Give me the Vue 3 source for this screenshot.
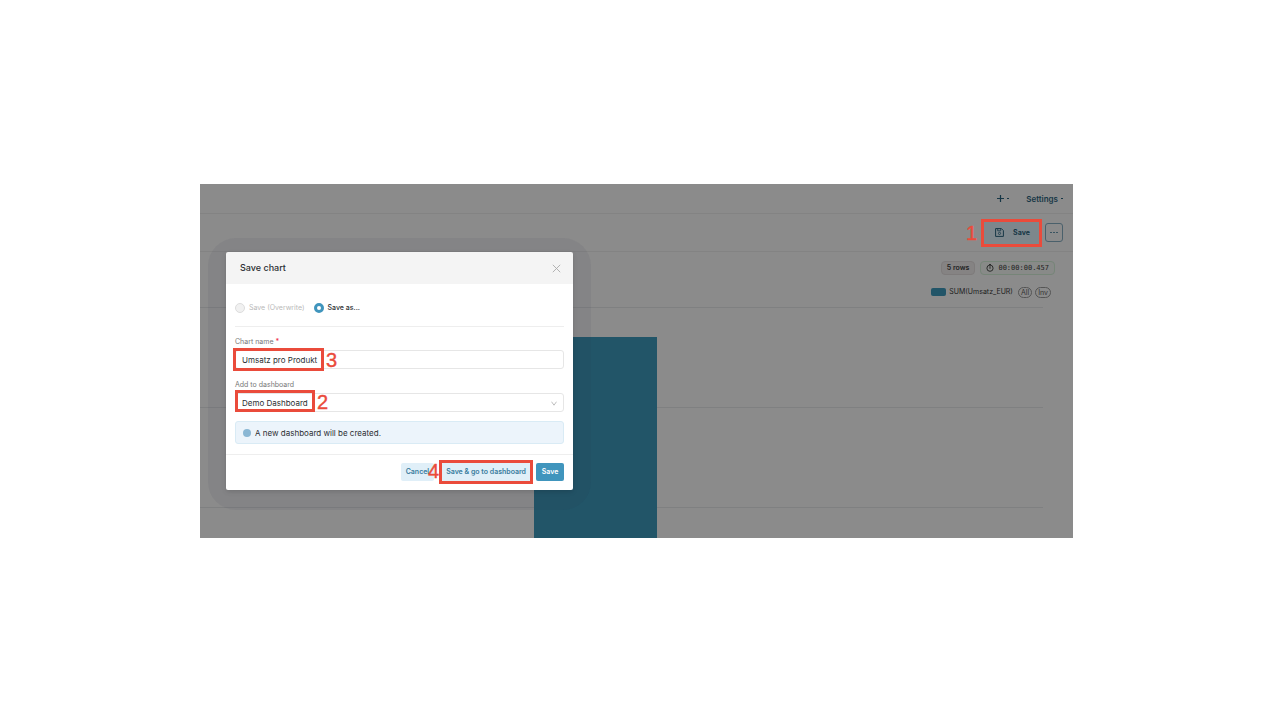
<script setup>
import { ref } from 'vue'

const mode = ref('saveas')
const chartName = ref('Umsatz pro Produkt')
const dashboard = ref('Demo Dashboard')
</script>

<template>
  <main class="page">
    <section class="explore">
      <header class="topbar">
        <button class="nav plus" aria-label="New">
          <svg width="7" height="7" viewBox="0 0 7 7"><path d="M3.5 0v7M0 3.5h7" stroke="currentColor" stroke-width="1.2" /></svg>
          <i class="caret"></i>
        </button>
        <button class="nav">Settings<i class="caret"></i></button>
      </header>

      <div class="toolbar">
        <div class="marked">
          <button class="save-top">
            <svg width="9" height="9" viewBox="0 0 9 9" fill="none" stroke="currentColor" stroke-width="1">
              <path d="M.6.6h5.8l2 2v5.8H.6z" />
              <path d="M2.7.8v2h3v-2" stroke-width=".8" />
              <circle cx="4.5" cy="5.4" r="1.1" stroke-width=".8" />
            </svg>
            Save
          </button>
          <span class="mark mark-one"><b>1</b></span>
        </div>
        <button class="more" aria-label="More"><i></i><i></i><i></i></button>
      </div>

      <div class="status">
        <span class="chip">5 rows</span>
        <span class="chip timer">
          <svg width="8" height="8" viewBox="0 0 8 8" fill="none" stroke="currentColor" stroke-width=".9">
            <circle cx="4" cy="4.2" r="3.1" /><path d="M4 2.2v2.6M3 .5h2" />
          </svg>
          00:00:00.457
        </span>
      </div>

      <div class="legend">
        <i class="swatch"></i>
        <span class="series">SUM(Umsatz_EUR)</span>
        <button class="pill">All</button>
        <button class="pill">Inv</button>
      </div>

      <div class="plot"><div class="bar"></div></div>

      <form class="modal" role="dialog" aria-labelledby="modal-title" @submit.prevent>
        <div class="modal-head">
          <h1 id="modal-title">Save chart</h1>
          <button type="button" class="close" aria-label="Close">
            <svg width="9" height="9" viewBox="0 0 9 9"><path d="M.8.8l7.4 7.4M8.2.8L.8 8.2" stroke="currentColor" stroke-width=".9" /></svg>
          </button>
        </div>

        <div class="modal-body">
          <div class="radios">
            <label class="radio off"><input v-model="mode" type="radio" name="mode" value="overwrite" disabled />Save (Overwrite)</label>
            <label class="radio"><input v-model="mode" type="radio" name="mode" value="saveas" />Save as...</label>
          </div>

          <label class="caption" for="chart-name">Chart name <em>*</em></label>
          <div class="field">
            <input id="chart-name" v-model="chartName" type="text" />
            <span class="mark mark-three"><b>3</b></span>
          </div>

          <label class="caption" for="dashboard">Add to dashboard</label>
          <div class="field">
            <select id="dashboard" v-model="dashboard">
              <option>Demo Dashboard</option>
            </select>
            <svg class="chevron" width="6" height="5" viewBox="0 0 6 5" fill="none"><path d="M.5.7L3 4.2 5.5.7" stroke="currentColor" stroke-width=".8" /></svg>
            <span class="mark mark-two"><b>2</b></span>
          </div>

          <div class="alert"><i></i>A new dashboard will be created.</div>
        </div>

        <div class="modal-foot">
          <button type="button" class="btn">Cancel</button>
          <div class="marked go">
            <button type="button" class="btn">Save &amp; go to dashboard</button>
            <span class="mark mark-four"><b>4</b></span>
          </div>
          <button type="submit" class="btn primary">Save</button>
        </div>
      </form>
    </section>
  </main>
</template>

<style>
body {
  background: #fff;
}
</style>

<style scoped>
* {
  box-sizing: border-box;
}
button,
input,
select {
  font: inherit;
  color: inherit;
  margin: 0;
  padding: 0;
  border: 0;
  background: none;
}
.page {
  padding: 184px 197px 0 200px;
  font: 8px/12px Inter, "Liberation Sans", sans-serif;
  color: #2c2f33;
}
.explore {
  position: relative;
  background: #8b8b8b;
  overflow: hidden;
}
.topbar {
  display: flex;
  justify-content: flex-end;
  align-items: center;
  gap: 17px;
  height: 30px;
  padding-right: 10px;
  border-bottom: 1px solid #838383;
}
.nav {
  display: flex;
  align-items: center;
  gap: 3px;
  font-weight: 600;
  color: #173746;
}
.caret {
  width: 2px;
  height: 1px;
  background: #173746;
}
.toolbar {
  display: flex;
  justify-content: flex-end;
  align-items: center;
  gap: 6px;
  height: 38px;
  padding-right: 10px;
  border-bottom: 1px solid #838383;
}
.marked {
  position: relative;
}
.save-top {
  display: flex;
  align-items: center;
  justify-content: center;
  gap: 9px;
  width: 55px;
  height: 22px;
  padding-left: 2px;
  font-size: 7px;
  font-weight: 700;
  color: #173746;
  background: #7d878c;
}
.more {
  display: flex;
  align-items: center;
  justify-content: center;
  gap: 1px;
  width: 18px;
  height: 19px;
  border: 1px solid #4a606b;
  border-radius: 3px;
}
.more i {
  width: 2px;
  height: 1px;
  background: #3a5461;
}
.status {
  display: flex;
  justify-content: flex-end;
  gap: 5px;
  padding: 9px 18px 0 0;
}
.chip {
  display: flex;
  align-items: center;
  gap: 4px;
  height: 14px;
  padding: 0 5px;
  border: 1px solid #7e7b7b;
  border-radius: 4px;
  background: #858383;
  font-size: 7px;
  font-weight: 600;
  color: #222;
}
.timer {
  border-color: #768578;
  background: #888a88;
  font-family: "DejaVu Sans Mono", "Liberation Mono", monospace;
  font-weight: 400;
  color: #222;
}
.legend {
  display: flex;
  justify-content: flex-end;
  align-items: center;
  gap: 3px;
  height: 12px;
  margin-top: 11px;
  padding-right: 22px;
}
.swatch {
  width: 15px;
  height: 8px;
  border-radius: 2px;
  background: #225568;
}
.series {
  margin-right: 2px;
  font-size: 7px;
  color: #1d1d1d;
}
.pill {
  height: 11px;
  padding: 0 2px;
  border: 1px solid #555;
  border-radius: 6px;
  font-size: 7px;
  line-height: 9px;
  color: #333;
}
.plot {
  display: flex;
  align-items: flex-end;
  height: 231px;
  margin: 9px 30px 0 0;
  background: repeating-linear-gradient(#7f8081 0 1px, transparent 1px 100px);
}
.bar {
  width: 14.6%;
  height: 87%;
  margin-left: 39.6%;
  background: #225568;
}
.modal {
  position: absolute;
  z-index: 1;
  top: 68px;
  left: 26px;
  width: 347px;
  border-radius: 2px;
  box-shadow: 0 2px 5px rgba(0, 0, 0, 0.14);
}
.modal::before {
  content: "";
  position: absolute;
  z-index: -1;
  inset: -14px -18px -20px;
  border-radius: 28px;
  background: rgba(40, 40, 60, 0.06);
}
.modal-head {
  display: flex;
  align-items: center;
  justify-content: space-between;
  height: 32px;
  padding: 0 12px 0 14px;
  border-radius: 2px 2px 0 0;
  background: #f4f4f4;
}
h1 {
  margin: 0;
  font-size: 9px;
  font-weight: 500;
}
.close {
  display: flex;
  color: #aaa;
}
.modal-body {
  padding: 0 9px 10px;
  background: #fff;
}
.radios {
  display: flex;
  align-items: center;
  gap: 9px;
  height: 43px;
  padding-top: 5px;
  margin-bottom: 8px;
  border-bottom: 1px solid #eee;
  font-size: 7px;
  font-weight: 500;
}
.radio {
  display: flex;
  align-items: center;
  gap: 4px;
}
.radio input {
  appearance: none;
  width: 10px;
  height: 10px;
  border: 3px solid #4095bd;
  border-radius: 50%;
  background: #fff;
}
.off {
  color: #b9b9b9;
  font-weight: 400;
}
.off input {
  border: 1px solid #ddd;
  background: #f1f1f1;
}
.caption {
  display: block;
  height: 15px;
  padding-top: 1px;
  font-size: 7px;
  color: #777;
}
.caption em {
  font-style: normal;
  font-weight: 600;
  color: #f0384a;
}
.field {
  position: relative;
  margin-bottom: 9px;
}
.field input,
.field select {
  display: block;
  appearance: none;
  width: 100%;
  height: 19px;
  padding: 0 6px;
  border: 1px solid #e6e6e6;
  border-radius: 3px;
  background: #fff;
}
.chevron {
  position: absolute;
  top: 8px;
  right: 7px;
  color: #b0b0b0;
}
.alert {
  display: flex;
  align-items: center;
  gap: 4px;
  height: 23px;
  padding: 0 7px;
  border: 1px solid #d9ebf5;
  border-radius: 3px;
  background: #ecf4fb;
}
.alert i {
  width: 8px;
  height: 8px;
  border-radius: 50%;
  background: #8ab7d4;
}
.modal-foot {
  display: flex;
  justify-content: flex-end;
  gap: 5px;
  padding: 8px 9px 9px;
  border-top: 1px solid #eee;
  border-radius: 0 0 2px 2px;
  background: #fff;
}
.go {
  margin-left: 2px;
}
.btn {
  display: block;
  height: 18px;
  padding: 0 5px;
  border-radius: 2px;
  background: #e0eff8;
  font-size: 7px;
  font-weight: 600;
  color: #397c9e;
}
.primary {
  min-width: 28px;
  background: #4095bd;
  color: #fff;
}
.mark {
  position: absolute;
  border: 3px solid #ea4b3b;
  pointer-events: none;
}
.mark b {
  position: absolute;
  font: 20px/20px "Liberation Sans", Arial, sans-serif;
  color: #ea4b3b;
  -webkit-text-stroke: 0.4px #ea4b3b;
}
.mark-one {
  inset: -3px;
}
.mark-one b {
  top: 1px;
  right: 62px;
}
.mark-two {
  top: -3px;
  left: 0;
  width: 80px;
  height: 22px;
}
.mark-two b {
  top: -1px;
  left: 79px;
}
.mark-three {
  top: -2px;
  left: -2px;
  width: 91px;
  height: 23px;
}
.mark-three b {
  top: -1px;
  left: 90px;
}
.mark-four {
  inset: -3px -2px;
}
.mark-four b {
  top: -2px;
  right: 91px;
}
</style>
